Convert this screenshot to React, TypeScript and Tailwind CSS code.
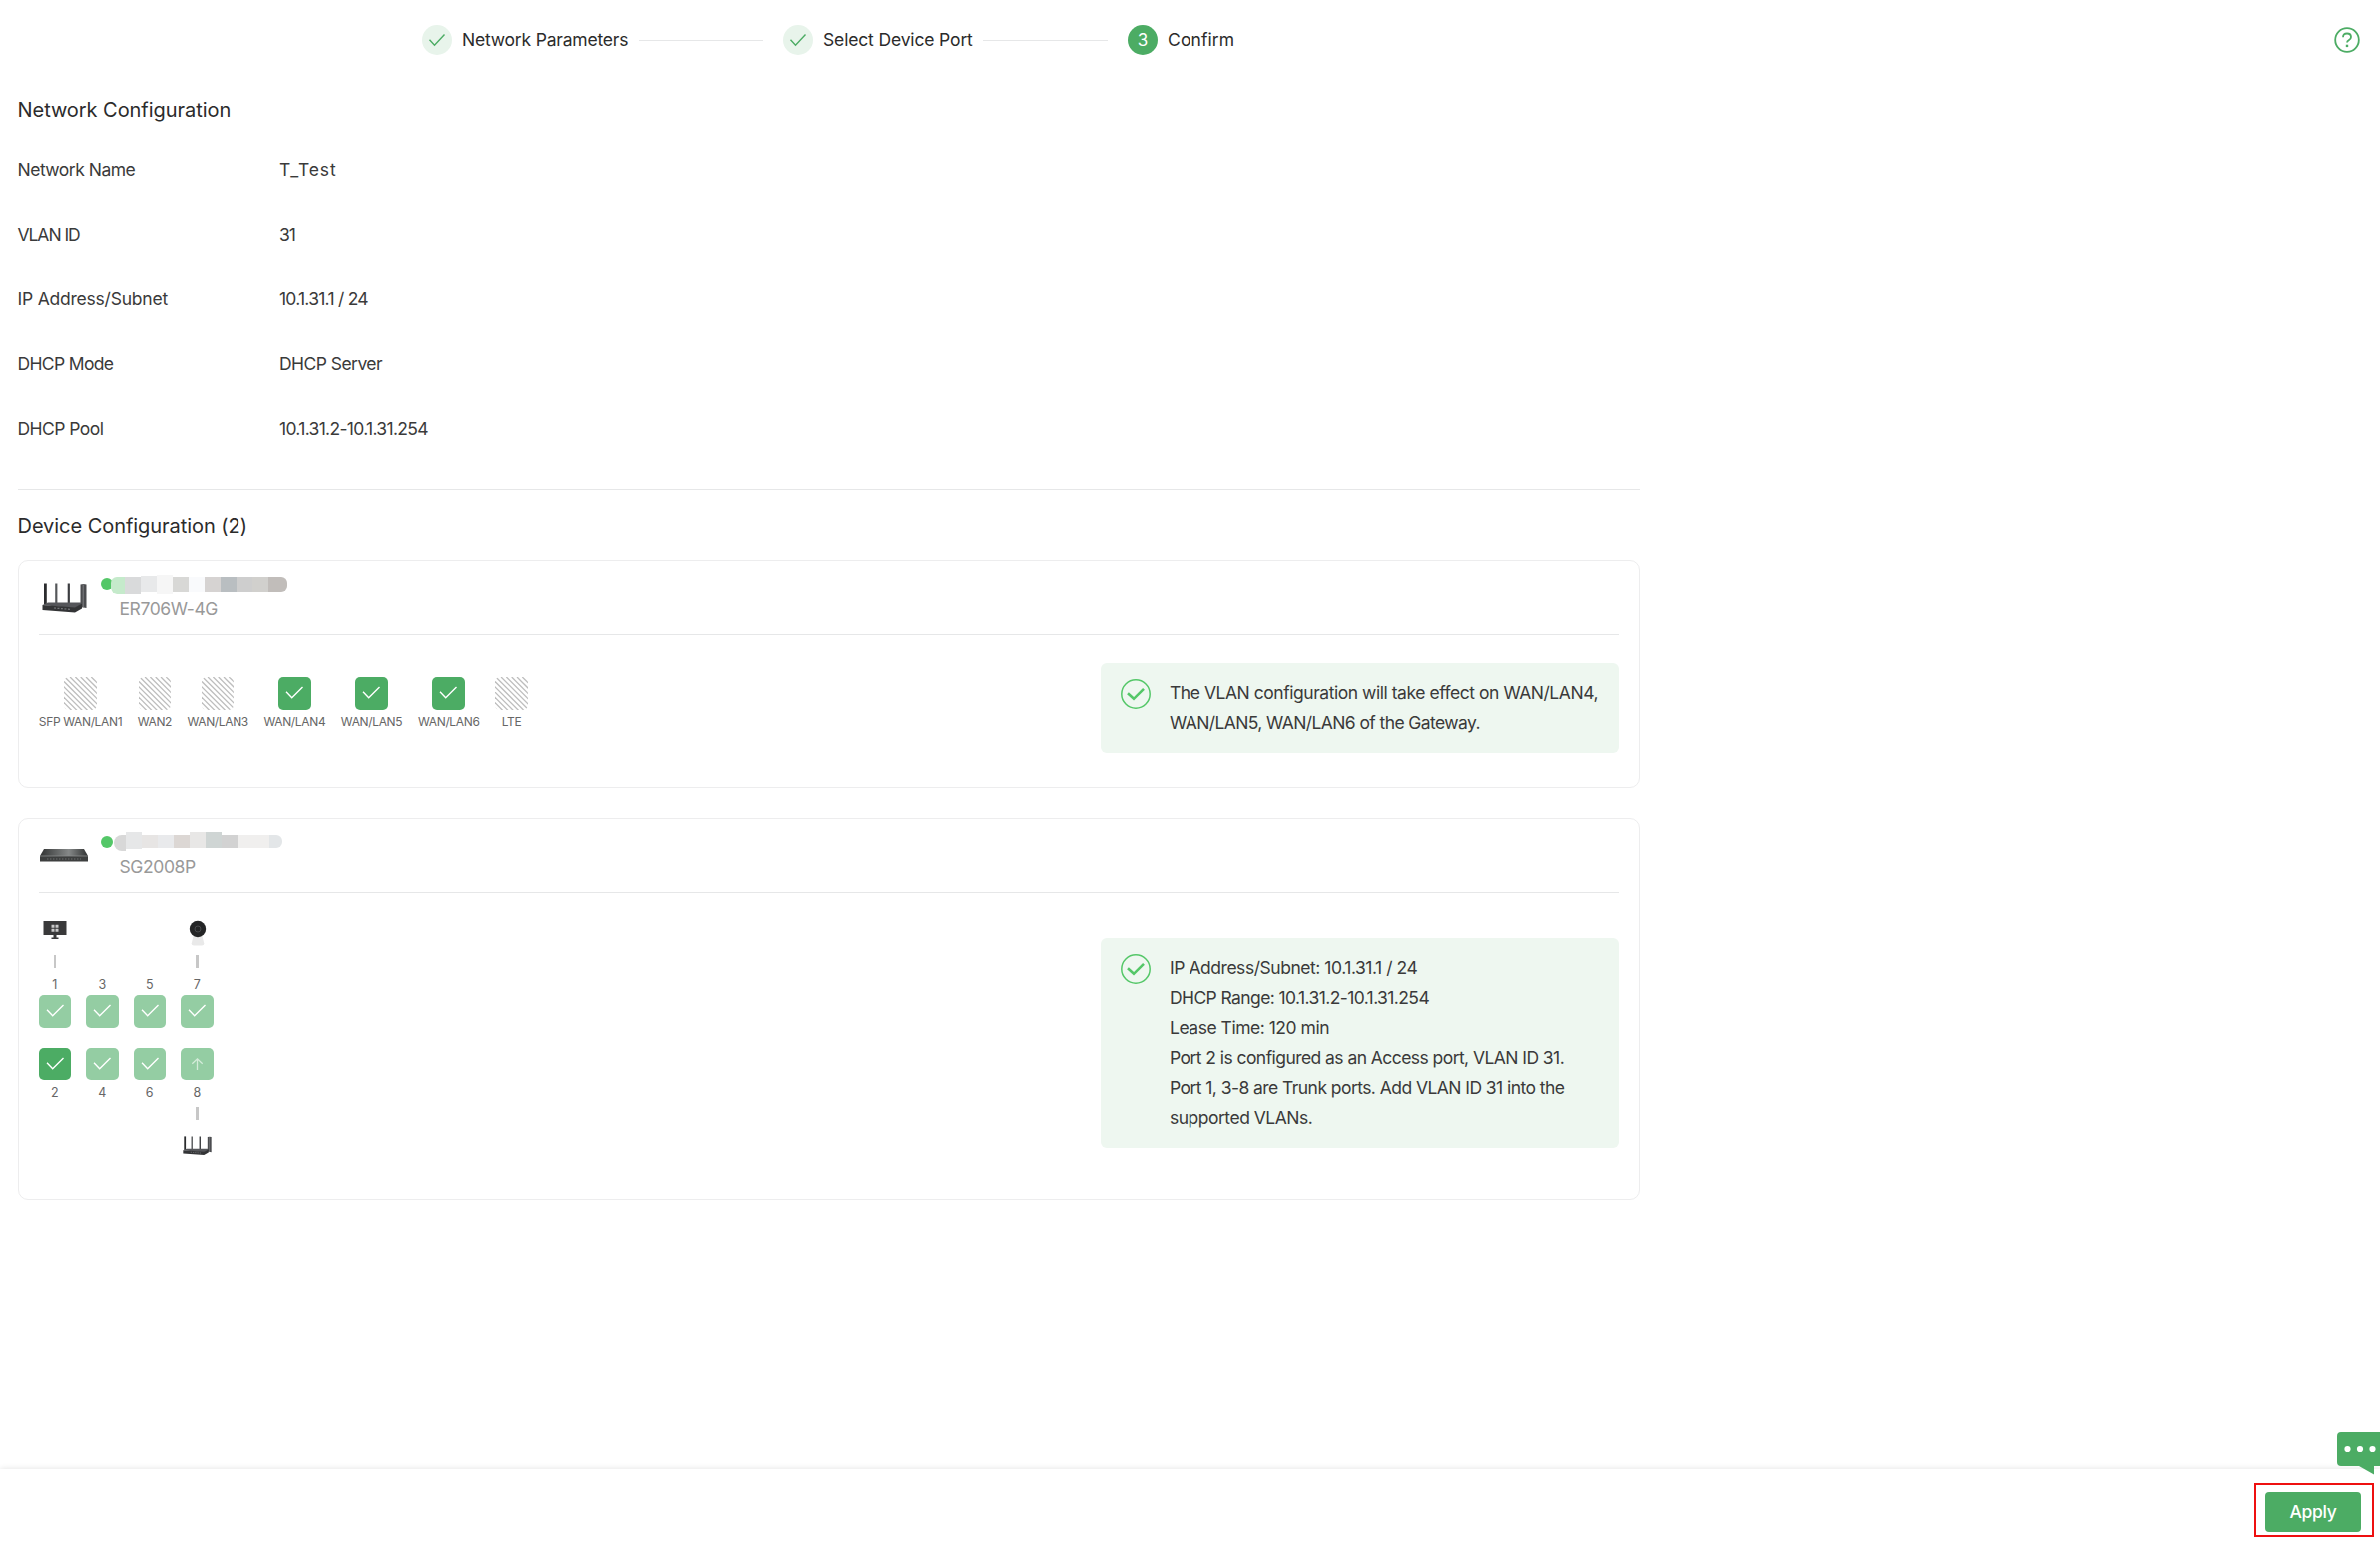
import type { ReactNode } from "react";

type PortState = "disabled" | "active" | "trunk" | "uplink";

interface Port {
  label: string;
  state: PortState;
}

const STEPS = [
  { label: "Network Parameters", done: true, labelClass: "w-[167px] tracking-[-0.2px]" },
  { label: "Select Device Port", done: true, labelClass: "w-[150px] tracking-[-0.15px]" },
  { label: "Confirm", done: false, labelClass: "tracking-[0.1px]" },
];

const NETWORK_ROWS = [
  { label: "Network Name", value: "T_Test", labelClass: "tracking-[-0.5px]", valueClass: "tracking-[0.85px]" },
  { label: "VLAN ID", value: "31", labelClass: "tracking-[-1.05px]", valueClass: "tracking-[-1px]" },
  { label: "IP Address/Subnet", value: "10.1.31.1 / 24", labelClass: "tracking-[-0.22px]", valueClass: "tracking-[-0.75px]" },
  { label: "DHCP Mode", value: "DHCP Server", labelClass: "tracking-[-0.65px]", valueClass: "tracking-[-0.55px]" },
  { label: "DHCP Pool", value: "10.1.31.2-10.1.31.254", labelClass: "tracking-[-0.55px]", valueClass: "tracking-[-0.68px]" },
];

const GATEWAY_PORTS: (Port & { width: string })[] = [
  { label: "SFP WAN/LAN1", state: "disabled", width: "w-[84px]" },
  { label: "WAN2", state: "disabled", width: "w-[34px]" },
  { label: "WAN/LAN3", state: "disabled", width: "w-[61.8px]" },
  { label: "WAN/LAN4", state: "active", width: "w-[61.8px]" },
  { label: "WAN/LAN5", state: "active", width: "w-[61.8px]" },
  { label: "WAN/LAN6", state: "active", width: "w-[61.8px]" },
  { label: "LTE", state: "disabled", width: "w-[33px]" },
];

const TOP_PORTS: Port[] = [
  { label: "1", state: "trunk" },
  { label: "3", state: "trunk" },
  { label: "5", state: "trunk" },
  { label: "7", state: "trunk" },
];

const BOTTOM_PORTS: Port[] = [
  { label: "2", state: "active" },
  { label: "4", state: "trunk" },
  { label: "6", state: "trunk" },
  { label: "8", state: "uplink" },
];

const PORT_STYLES: Record<PortState, string> = {
  disabled: "",
  active: "bg-[#4cac64]",
  trunk: "bg-[#94cda3]",
  uplink: "bg-[#94cda3]",
};

const RouterIcon = ({ className }: { className: string }) => (
  <svg viewBox="0 0 45 30" className={className}>
    <path d="M2 0.5h2.8v21H2z" fill="#2b2c2e" />
    <path d="M13.2 0.5h2.2v20h-2.2z" fill="#55575a" />
    <path d="M25.7 0.5h2.2v20h-2.2z" fill="#3c3d40" />
    <path d="M38.5 1.5l3-.5 3 .5v23.5l-6-1z" fill="#4b4c4f" />
    <path d="M41.2 1.5v23" stroke="#8b8c8e" strokeWidth="0.8" />
    <path d="M0.5 22L6 19.5h33l1 1.5-7 4.5z" fill="#55565a" />
    <path d="M0.5 22L33 24.5l7-4v5l-7 4L0.5 27z" fill="#333436" />
    <path d="M12 25l17 1.4" stroke="#76787b" strokeWidth="1.2" strokeDasharray="2 1.5" />
  </svg>
);

const SwitchIcon = () => (
  <svg viewBox="0 0 48 13" className="-mt-[1px] h-[13px] w-12">
    <defs>
      <linearGradient id="switch-top" x1="0" x2="1">
        <stop offset="0" stopColor="#313333" />
        <stop offset="0.6" stopColor="#858888" />
        <stop offset="1" stopColor="#2f3131" />
      </linearGradient>
    </defs>
    <path d="M4 0h40l4 7H0z" fill="url(#switch-top)" />
    <path d="M0 7h48v5.5H0z" fill="#3d3f3f" />
    <path d="M0 7h48" stroke="#8b8e8e" strokeWidth="0.8" />
    <path d="M7 10h34" stroke="#555757" strokeWidth="2" strokeDasharray="1.5 1.5" />
  </svg>
);

const MonitorIcon = () => (
  <svg viewBox="0 0 24 20" className="h-5 w-6">
    <path d="M0.5 1h23v14H0.5z" fill="#39393a" />
    <path d="M10.5 15h3v2.5h-3zM8.5 17.5h7V19h-7z" fill="#39393a" />
    <path d="M8.5 4.7h3v3h-3zM12.5 4.7h3v3h-3zM8.5 8.7h3v3h-3zM12.5 8.7h3v3h-3z" fill="#c9c9c9" />
  </svg>
);

const CameraIcon = () => (
  <svg viewBox="0 0 18 27" className="ml-[1px] h-[27px] w-[18px]">
    <path d="M4.5 16h9l1.8 7.5q.2 2-2.3 2H5q-2.500 0-2.300-2z" fill="#e9e9e9" />
    <circle cx="9" cy="9" r="8.2" fill="#242526" />
    <circle cx="9" cy="9" r="3" fill="none" stroke="#48494b" strokeWidth="1" />
  </svg>
);

const StepCheck = () => (
  <svg viewBox="0 0 30 30" className="size-[30px] shrink-0">
    <circle cx="15" cy="15" r="15" fill="#e8f4eb" />
    <path d="M7.5 14.8l5 5.4 10-10.8" fill="none" stroke="#4cac64" strokeWidth="1.4" />
  </svg>
);

const PortBox = ({ state }: { state: PortState }) => (
  <div className={`size-[32.5px] shrink-0 overflow-hidden rounded-[5px] ${PORT_STYLES[state]}`}>
    <svg viewBox="0 0 32.5 32.5" className="size-full" fill="none">
      {state === "disabled" &&
        Array.from({ length: 13 }, (_, i) => (
          <path key={i} d={`M${-31 + i * 5.3} 0l34 34`} stroke="#bdbdbd" strokeWidth="1.3" />
        ))}
      {(state === "active" || state === "trunk") && (
        <path d="M8 14.7l5.7 6L24.5 10" stroke="#fff" strokeWidth="1.4" />
      )}
      {state === "uplink" && (
        <path d="M16.5 22V11M11.3 15.8l5.2-5 5.2 5" stroke="#d3ebd9" strokeWidth="1.3" />
      )}
    </svg>
  </div>
);

const InfoBox = ({ children }: { children: ReactNode }) => (
  <div className="flex w-[519px] gap-5 rounded-[6px] bg-[#eef7f0] px-5 py-[15px]">
    <svg viewBox="0 0 30 30" className="mt-[1px] size-[30px] shrink-0" fill="none">
      <circle cx="15" cy="15" r="14.2" stroke="#54c768" strokeWidth="1.5" />
      <path d="M7 14.2l6 5.6 10-10" stroke="#54c768" strokeWidth="2.6" />
    </svg>
    <div className="-ml-[0.5px] text-[17.5px] leading-[30px] whitespace-nowrap">{children}</div>
  </div>
);

const DeviceHeader = ({
  icon,
  model,
  mask,
}: {
  icon: ReactNode;
  model: string;
  mask: ReactNode;
}) => (
  <div className="flex h-[74px] border-b border-[#e6e7e8]">
    <div className="flex w-[51px] shrink-0 items-center justify-center">{icon}</div>
    <div className="ml-[11.5px] pt-[13px]">
      <div className="flex h-[20px] items-center">
        <span className="size-[11.5px] shrink-0 rounded-full bg-[#54c768]" />
        {mask}
      </div>
      <div className="mt-[2px] ml-[18.5px] text-[17.5px] leading-[26px] tracking-[-0.4px] text-[#999]">{model}</div>
    </div>
  </div>
);

const GatewayMask = () => (
  <div className="-ml-[2px] flex h-[19px] w-[177px] items-center overflow-hidden rounded-md">
    <span className="mt-[2px] h-[17px] w-[14px] rounded-l-md bg-[#c5eacb]" />
    <span className="mt-[2px] h-[17px] w-4 bg-[#d9dadb]" />
    <span className="h-[16px] w-4 bg-[#e8e9ea]" />
    <span className="h-full w-4 bg-[#f6f6f6]" />
    <span className="h-[15px] w-4 bg-[#d8d8d6]" />
    <span className="h-[15px] w-4 bg-[#f9fafc]" />
    <span className="h-[15px] w-4 bg-[#d6d3d2]" />
    <span className="h-[15px] w-4 bg-[#b9bec1]" />
    <span className="h-[15px] w-4 bg-[#cecece]" />
    <span className="h-[15px] w-4 bg-[#d1d0cd]" />
    <span className="h-[15px] w-[19px] rounded-r-md bg-[#c1bdba]" />
  </div>
);

const SwitchMask = () => (
  <div className="ml-[1px] flex h-[20px] w-[171px] items-start overflow-hidden">
    <span className="mt-[3px] h-4 w-[12px] rounded-l-lg bg-[#d8d8d8]" />
    <span className="h-[17px] w-4 bg-[#e6e7e8]" />
    <span className="mt-[3px] h-[13px] w-4 bg-[#e7e5e4]" />
    <span className="mt-[3px] h-[13px] w-4 bg-[#e9eaec]" />
    <span className="mt-[3px] h-[13px] w-4 bg-[#dcd7d4]" />
    <span className="h-[16px] w-4 bg-[#e8e7e6]" />
    <span className="h-[16px] w-4 bg-[#cfd5d4]" />
    <span className="mt-[3px] h-[13px] w-4 bg-[#d2d2d2]" />
    <span className="mt-[3px] h-[13px] w-8 bg-[#f0efee]" />
    <span className="mt-[3px] h-[13px] w-[13px] rounded-r-md bg-[#e3e6e8]" />
  </div>
);

const Tick = () => <span className="h-[13px] w-[2.5px] bg-[#c7c7c7]" />;

export default function App() {
  return (
    <div className="flex h-[1546px] w-[2385px] flex-col overflow-hidden bg-white font-['Inter',sans-serif] text-[#3a3a3a]">
      {/* Stepper */}
      <header className="flex h-20 shrink-0 items-center pr-5 pl-[423px]">
        {STEPS.map((step, index) => (
          <div key={step.label} className="flex items-center">
            {step.done ? (
              <StepCheck />
            ) : (
              <span className="flex size-[30px] items-center justify-center rounded-full bg-[#4cac64] pt-[2px] text-[17px] text-white">
                {index + 1}
              </span>
            )}
            <span className={`ml-[10px] text-[17.5px] whitespace-nowrap text-[#2b2b2b] ${step.labelClass}`}>
              {step.label}
            </span>
            {step.done && <span className="mr-5 ml-[10px] h-px w-[125px] bg-[#e6e7e8]" />}
          </div>
        ))}
        <svg viewBox="0 0 26 26" className="ml-auto size-[26px]" fill="none" stroke="#4cac64" strokeWidth="1.8">
          <circle cx="13" cy="13" r="11.8" />
          <path d="M9 10.300q0-3.800 4-3.800t4 3.500q0 1.700-2 2.900-2 1.200-2 2.600" />
          <path d="M13 17.700v2.400" strokeWidth="2.4" />
        </svg>
      </header>

      <main className="w-[1660px] grow pr-[17.5px] pl-[17.5px]">
        {/* Network configuration */}
        <section className="h-[411px] border-b border-[#e6e7e8] pt-[15px]">
          <h2 className="text-[20px] leading-[30px] tracking-[-0.05px] text-[#2b2b2b]">Network Configuration</h2>
          <dl className="mt-[13px] text-[17.5px]">
            {NETWORK_ROWS.map((row) => (
              <div key={row.label} className="flex h-[65px] items-center">
                <dt className={`w-[262.5px] ${row.labelClass}`}>{row.label}</dt>
                <dd className={row.valueClass}>{row.value}</dd>
              </div>
            ))}
          </dl>
        </section>

        <h2 className="mt-[21px] text-[20px] leading-[30px] tracking-[-0.05px] text-[#2b2b2b]">
          Device Configuration (2)
        </h2>

        {/* Gateway */}
        <section className="mt-[19px] h-[229px] rounded-[10px] border-[1.5px] border-[#ededee] px-5">
          <DeviceHeader icon={<RouterIcon className="mt-[1px] h-[30px] w-[45px]" />} model="ER706W-4G" mask={<GatewayMask />} />
          <div className="flex items-start justify-between">
            <div className="flex gap-[15.4px] pt-[42px]">
              {GATEWAY_PORTS.map((port) => (
                <div key={port.label} className={`flex flex-col items-center ${port.width}`}>
                  <PortBox state={port.state} />
                  <span className="mt-[3px] text-[12px] leading-[18px] tracking-[-0.35px] whitespace-nowrap text-[#666]">
                    {port.label}
                  </span>
                </div>
              ))}
            </div>
            <div className="pt-7">
              <InfoBox>
                <p className="tracking-[-0.46px]">The VLAN configuration will take effect on WAN/LAN4,</p>
                <p className="tracking-[-0.6px]">WAN/LAN5, WAN/LAN6 of the Gateway.</p>
              </InfoBox>
            </div>
          </div>
        </section>

        {/* Switch */}
        <section className="mt-[30px] h-[382px] rounded-[10px] border-[1.5px] border-[#ededee] px-5">
          <DeviceHeader icon={<SwitchIcon />} model="SG2008P" mask={<SwitchMask />} />
          <div className="flex items-start justify-between">
            <div className="pt-[27px]">
              <div className="flex gap-[15px]">
                {TOP_PORTS.map((port) => (
                  <div key={port.label} className="flex w-[32.5px] flex-col items-center">
                    <div className="flex h-[35px] items-start">
                      {port.label === "1" && <MonitorIcon />}
                      {port.label === "7" && <CameraIcon />}
                    </div>
                    <div className="flex h-[13px]">{(port.label === "1" || port.label === "7") && <Tick />}</div>
                    <span className="mt-[8px] mb-[1px] text-[12.5px] leading-[18px] text-[#666]">{port.label}</span>
                    <PortBox state={port.state} />
                  </div>
                ))}
              </div>
              <div className="mt-5 flex gap-[15px]">
                {BOTTOM_PORTS.map((port) => (
                  <div key={port.label} className="flex w-[32.5px] flex-col items-center">
                    <PortBox state={port.state} />
                    <span className="mt-[3.5px] text-[12.5px] leading-[18px] text-[#666]">{port.label}</span>
                    {port.state === "uplink" && (
                      <>
                        <span className="mt-[5px] flex h-[13px]">
                          <Tick />
                        </span>
                        <RouterIcon className="mt-[16.5px] ml-[1px] h-[19.5px] w-[29px]" />
                      </>
                    )}
                  </div>
                ))}
              </div>
            </div>
            <div className="pt-[45px]">
              <InfoBox>
                <p className="tracking-[-0.46px]">IP Address/Subnet: 10.1.31.1 / 24</p>
                <p className="tracking-[-0.6px]">DHCP Range: 10.1.31.2-10.1.31.254</p>
                <p className="tracking-[-0.48px]">Lease Time: 120 min</p>
                <p className="tracking-[-0.56px]">Port 2 is configured as an Access port, VLAN ID 31.</p>
                <p className="tracking-[-0.56px]">Port 1, 3-8 are Trunk ports. Add VLAN ID 31 into the</p>
                <p className="tracking-[-0.5px]">supported VLANs.</p>
              </InfoBox>
            </div>
          </div>
        </section>
      </main>

      {/* Footer */}
      <footer className="relative flex h-[74px] shrink-0 items-start justify-end pt-[14px] pr-[6px] shadow-[0_0_6px_rgba(0,0,0,0.12)]">
        <svg viewBox="0 0 43 43" className="absolute -top-[37px] right-0 size-[43px]">
          <path d="M4 0h39v34h-6v8.500L22 34H4q-4 0-4-4V4q0-4 4-4z" fill="#4cac64" />
          <circle cx="10.5" cy="17" r="3.1" fill="#fff" />
          <circle cx="23" cy="17" r="3.1" fill="#fff" />
          <circle cx="35.5" cy="17" r="3.1" fill="#fff" />
        </svg>
        <div className="flex h-[54px] w-[120px] items-center justify-center border-2 border-[#ee1010] pt-[4px] pr-[2px]">
          <button className="h-10 w-24 rounded-[4px] bg-[#4cac64] text-[17.5px] font-medium tracking-[-0.3px] text-white">
            Apply
          </button>
        </div>
      </footer>
    </div>
  );
}
